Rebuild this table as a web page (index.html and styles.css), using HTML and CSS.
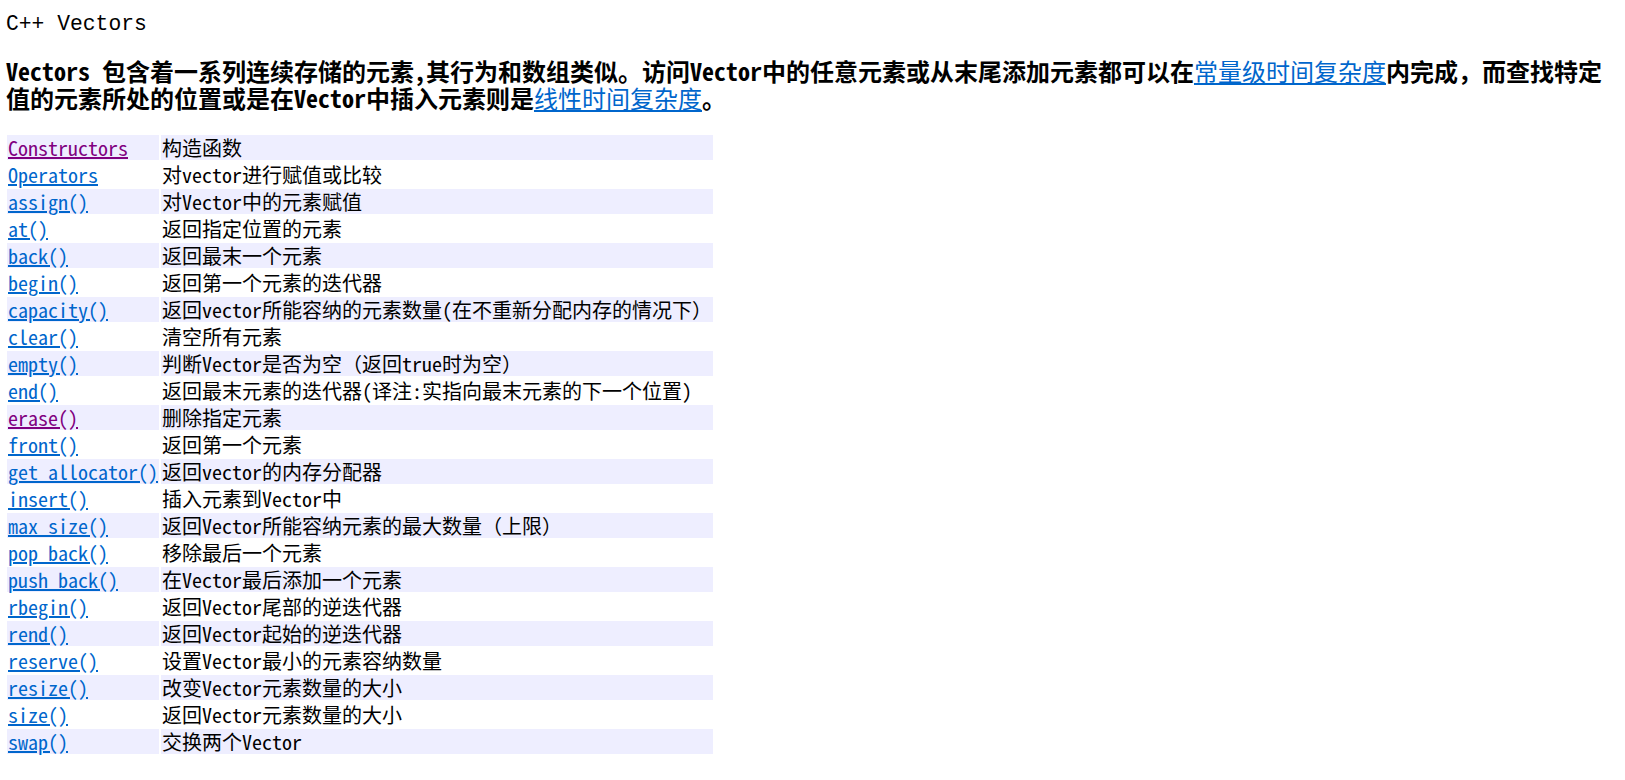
FILE: index.html
```html
<!DOCTYPE html>
<html>
<head>
<meta charset="utf-8">
<title>C++ Vectors</title>
<link rel="stylesheet" href="styles.css">
</head>
<body>
<div class="page">
  <div class="title">C++ Vectors</div>
  <p class="intro"><b>Vectors 包含着一系列连续存储的元素,其行为和数组类似。访问Vector中的任意元素或从末尾添加元素都可以在</b><a href="#">常量级时间复杂度</a><b>内完成，而查找特定值的元素所处的位置或是在Vector中插入元素则是</b><a href="#">线性时间复杂度</a><b>。</b></p>
  <table class="funcs">
    <tr class="shade"><td class="name"><a class="visited" href="#">Constructors</a></td><td>构造函数</td></tr>
    <tr><td class="name"><a href="#">Operators</a></td><td>对vector进行赋值或比较</td></tr>
    <tr class="shade"><td class="name"><a href="#">assign()</a></td><td>对Vector中的元素赋值</td></tr>
    <tr><td class="name"><a href="#">at()</a></td><td>返回指定位置的元素</td></tr>
    <tr class="shade"><td class="name"><a href="#">back()</a></td><td>返回最末一个元素</td></tr>
    <tr><td class="name"><a href="#">begin()</a></td><td>返回第一个元素的迭代器</td></tr>
    <tr class="shade"><td class="name"><a href="#">capacity()</a></td><td>返回vector所能容纳的元素数量(在不重新分配内存的情况下）</td></tr>
    <tr><td class="name"><a href="#">clear()</a></td><td>清空所有元素</td></tr>
    <tr class="shade"><td class="name"><a href="#">empty()</a></td><td>判断Vector是否为空（返回true时为空）</td></tr>
    <tr><td class="name"><a href="#">end()</a></td><td>返回最末元素的迭代器(译注:实指向最末元素的下一个位置)</td></tr>
    <tr class="shade"><td class="name"><a class="visited" href="#">erase()</a></td><td>删除指定元素</td></tr>
    <tr><td class="name"><a href="#">front()</a></td><td>返回第一个元素</td></tr>
    <tr class="shade"><td class="name"><a href="#">get_allocator()</a></td><td>返回vector的内存分配器</td></tr>
    <tr><td class="name"><a href="#">insert()</a></td><td>插入元素到Vector中</td></tr>
    <tr class="shade"><td class="name"><a href="#">max_size()</a></td><td>返回Vector所能容纳元素的最大数量（上限）</td></tr>
    <tr><td class="name"><a href="#">pop_back()</a></td><td>移除最后一个元素</td></tr>
    <tr class="shade"><td class="name"><a href="#">push_back()</a></td><td>在Vector最后添加一个元素</td></tr>
    <tr><td class="name"><a href="#">rbegin()</a></td><td>返回Vector尾部的逆迭代器</td></tr>
    <tr class="shade"><td class="name"><a href="#">rend()</a></td><td>返回Vector起始的逆迭代器</td></tr>
    <tr><td class="name"><a href="#">reserve()</a></td><td>设置Vector最小的元素容纳数量</td></tr>
    <tr class="shade"><td class="name"><a href="#">resize()</a></td><td>改变Vector元素数量的大小</td></tr>
    <tr><td class="name"><a href="#">size()</a></td><td>返回Vector元素数量的大小</td></tr>
    <tr class="shade"><td class="name"><a href="#">swap()</a></td><td>交换两个Vector</td></tr>
  </table>
</div>
</body>
</html>
```

FILE: styles.css
```css
html, body {
  margin: 0;
  padding: 0;
  background: #ffffff;
  color: #000000;
}

.page {
  padding: 0 0 0 5px;
  font-family: "Noto Sans Mono CJK SC", "Noto Sans CJK SC", "Liberation Mono", monospace;
}

.title {
  margin: 12px 0 0 1px;
  font-family: "Liberation Mono", "Noto Sans CJK SC", monospace;
  font-size: 21.33px;
  line-height: normal;
}

.intro {
  margin: 21px 0 0 1px;
  font-size: 24px;
  line-height: 27px;
}

.intro b {
  font-weight: bold;
}

.intro a {
  font-weight: normal;
  color: #0066cc;
  text-decoration: underline;
}

.funcs {
  margin-top: 22px;
  width: 710px;
  border-collapse: separate;
  border-spacing: 2px;
  font-size: 20px;
}

.funcs td {
  padding: 0 1px;
  height: 25px;
  line-height: 25px;
  white-space: nowrap;
  vertical-align: middle;
}

.funcs td.name {
  width: 150px;
}

.funcs tr.shade td {
  background: #eeeeff;
}

.funcs a {
  color: #0066cc;
  text-decoration: underline;
}

.funcs a.visited {
  color: #800080;
}
```
